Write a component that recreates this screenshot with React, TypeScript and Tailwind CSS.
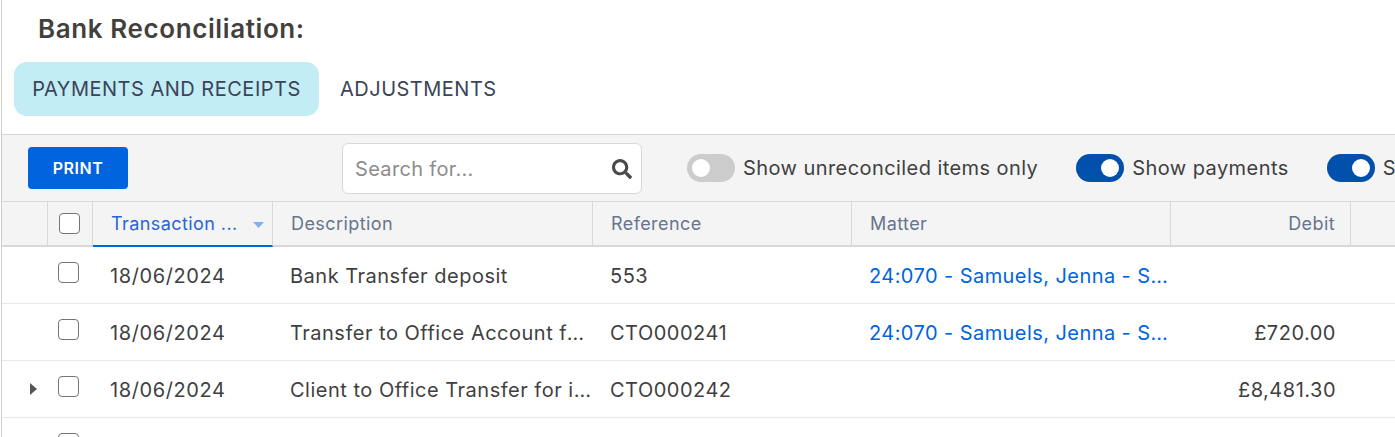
import { FaSearch } from "react-icons/fa";

interface Row {
  date: string;
  description: string;
  reference: string;
  matter?: string;
  debit?: string;
  expandable?: boolean;
}

const rows: Row[] = [
  {
    date: "18/06/2024",
    description: "Bank Transfer deposit",
    reference: "553",
    matter: "24:070 - Samuels, Jenna - Sale of 14 Elm Road",
  },
  {
    date: "18/06/2024",
    description: "Transfer to Office Account for invoice",
    reference: "CTO000241",
    matter: "24:070 - Samuels, Jenna - Sale of 14 Elm Road",
    debit: "£720.00",
  },
  {
    date: "18/06/2024",
    description: "Client to Office Transfer for invoices",
    reference: "CTO000242",
    debit: "£8,481.30",
    expandable: true,
  },
];

const gridCols =
  "grid grid-cols-[46px_45px_180px_320px_259px_319px_180px_1fr]";

function Toggle({ on, label }: { on: boolean; label: string }) {
  return (
    <div className="flex shrink-0 items-center gap-2">
      <span
        className={
          on
            ? "flex h-7 w-12 items-center justify-end rounded-full bg-[#0050ac] pr-[5px]"
            : "flex h-7 w-12 items-center rounded-full bg-[#cccccc] pl-[5px]"
        }
      >
        <span className="h-[18px] w-[18px] rounded-full bg-white" />
      </span>
      <span className="text-[20px] leading-7 tracking-[0.43px] text-[#3f3f3f]">{label}</span>
    </div>
  );
}

function Check() {
  return (
    <span className="block h-[21px] w-[21px] rounded-[4px] border-[1.5px] border-[#757575] bg-white" />
  );
}

export default function App() {
  return (
    <div className="ml-px h-[437px] w-[1395px] overflow-hidden border-l border-[#d0d0d0] bg-white font-['Inter',sans-serif] tracking-[0.5px]">
      <h1 className="pl-[36px] pt-[12px] text-[26px] leading-[34px] font-semibold tracking-[0.6px] text-[#423f3d]">
        Bank Reconciliation:
      </h1>
      <div className="mt-[16px] flex items-center pl-3">
        <div className="flex h-[54px] w-[305px] items-center justify-center rounded-[13px] bg-[#c2edf5] text-[20px] text-[#3c4457]">
          PAYMENTS AND RECEIPTS
        </div>
        <div className="ml-[21px] text-[20px] text-[#3c4457]">ADJUSTMENTS</div>
      </div>

      <div className="mt-[18px] flex h-[68px] items-center border-y border-[#d8d8d8] bg-[#f4f4f4] pl-[26px]">
        <button className="h-[42px] w-[100px] shrink-0 rounded-[4px] bg-[#0064de] text-[16px] font-semibold text-white">
          PRINT
        </button>
        <div className="mt-px ml-[214px] flex h-[51px] w-[300px] shrink-0 items-center justify-between rounded-[6px] border border-[#d8d8d8] bg-white pr-[9px] pl-[12px]">
          <span className="text-[20px] tracking-[0.33px] text-[#8c8c8c]">Search for...</span>
          <FaSearch className="h-[20px] w-[20px] text-[#4a4a4a]" />
        </div>
        <div className="ml-[45px] flex gap-[38px]">
          <Toggle on={false} label="Show unreconciled items only" />
          <Toggle on label="Show payments" />
          <Toggle on label="Show receipts" />
        </div>
      </div>

      <div className={`${gridCols} h-[45px] border-b-2 border-[#d8d8d8] bg-[#f4f4f4] text-[18px] tracking-[0.42px] text-[#66758c]`}>
        <div className="border-r border-[#d8d8d8]" />
        <div className="flex items-center border-r border-[#d8d8d8] pl-[11px]">
          <Check />
        </div>
        <div className="-mb-[2px] flex items-center justify-between border-r border-b-2 border-r-[#d8d8d8] border-b-[#0064de] pr-[8px] pl-[18px] text-[#2b63d9]">
          <span>Transaction ...</span>
          <svg width="11" height="6" viewBox="0 0 11 6" className="mt-[2px]">
            <path d="M0 0h11L5.5 6z" fill="#7fb0f0" />
          </svg>
        </div>
        <div className="flex items-center border-r border-[#d8d8d8] pl-[18px]">Description</div>
        <div className="flex items-center border-r border-[#d8d8d8] pl-[18px]">Reference</div>
        <div className="flex items-center border-r border-[#d8d8d8] pl-[18px]">Matter</div>
        <div className="flex items-center justify-end border-r border-[#d8d8d8] pr-[15px]">Debit</div>
        <div />
      </div>

      {rows.map((row) => (
        <div
          key={row.reference}
          className={`${gridCols} h-[57px] border-b border-[#e8e8e8] text-[20px] text-[#3f3f3f]`}
        >
          <div className="flex items-center justify-end pr-[11px]">
            {row.expandable && (
              <svg width="7" height="12" viewBox="0 0 7 12">
                <path d="M0 0l7 6-7 6z" fill="#555555" />
              </svg>
            )}
          </div>
          <div className="pt-[15px] pl-[10px]">
            <Check />
          </div>
          <div className="flex items-center pt-[2px] pl-[17px] tracking-[0.6px]">{row.date}</div>
          <div className="flex min-w-0 items-center pt-[2px] pr-[2px] pl-[17px]">
            <span className="truncate">{row.description}</span>
          </div>
          <div className="flex items-center pt-[2px] pl-[17px]">{row.reference}</div>
          <div className="flex min-w-0 items-center pt-[2px] pl-[17px]">
            <span className="truncate tracking-[0.43px] text-[#0064de]">{row.matter}</span>
          </div>
          <div className="flex items-center justify-end pt-[2px] pr-[15px]">{row.debit}</div>
          <div />
        </div>
      ))}
      <div className={gridCols}>
        <div />
        <div className="pt-[15px] pl-[10px]">
          <Check />
        </div>
      </div>
    </div>
  );
}
